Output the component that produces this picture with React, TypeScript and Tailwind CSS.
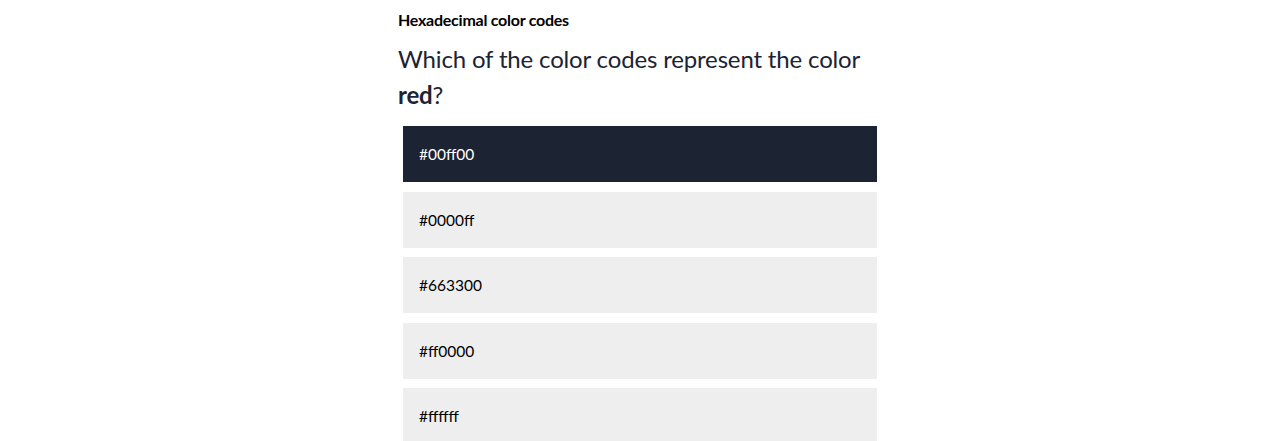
const options = ["#00ff00", "#0000ff", "#663300", "#ff0000", "#ffffff"];

export default function App() {
  const selected = 0;

  return (
    <div className="min-h-[441px] bg-white font-['Lato','Noto_Sans',sans-serif] text-[#1c2333]">
      <div className="mx-auto w-[484px] pt-[10px]">
        <h3 className="text-[16px] font-bold leading-[20px] tracking-[-0.25px] text-black">
          Hexadecimal color codes
        </h3>
        <p className="mt-[11px] text-[24px] leading-[36px] tracking-[-0.16px]">
          Which of the color codes represent the color <strong className="font-bold">red</strong>?
        </p>
        <div className="mt-[13px] flex flex-col gap-[9.5px] px-[5px]">
          {options.map((code, i) => (
            <button
              key={code}
              className={
                "flex h-[56px] w-full items-center px-[16px] pt-[2px] text-left text-[15.5px] " +
                (i === selected ? "bg-[#1c2333] text-white" : "bg-[#eeeeee] text-black")
              }
            >
              {code}
            </button>
          ))}
        </div>
      </div>
    </div>
  );
}
